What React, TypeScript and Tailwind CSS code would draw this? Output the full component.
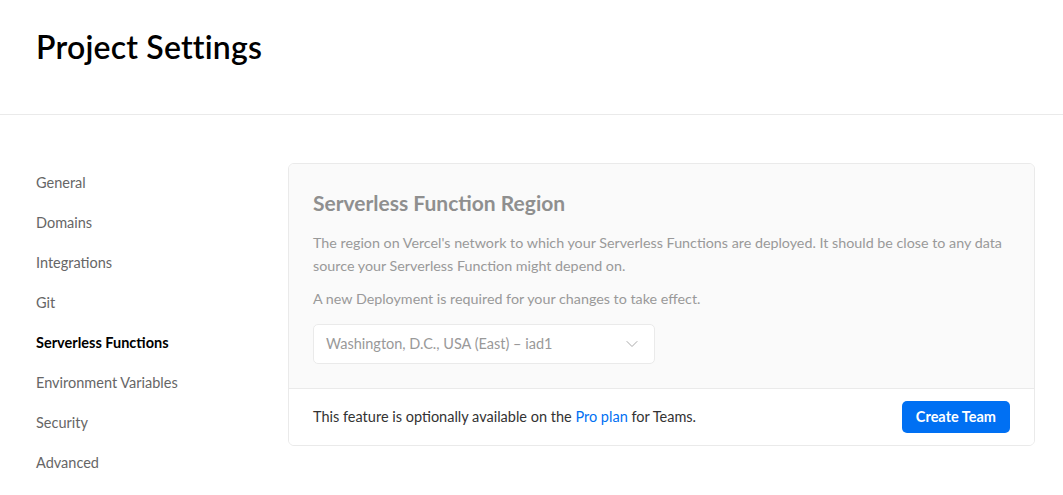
import { ChevronDown } from 'lucide-react'

const NAV = [
  'General',
  'Domains',
  'Integrations',
  'Git',
  'Serverless Functions',
  'Environment Variables',
  'Security',
  'Advanced',
]

export default function App() {
  const active = 'Serverless Functions'

  return (
    <div className="min-h-screen bg-white text-[#111] font-['Lato','Noto_Sans',sans-serif]">
      {/* Header */}
      <header className="h-[115px] border-b border-[#eaeaea] px-[36px] pt-[26px]">
        <h1 className="text-[32px] leading-[42px] font-semibold tracking-[0.2px] text-black">
          Project Settings
        </h1>
      </header>

      <div className="flex items-start pt-[48px] pl-[36px] pr-[28px]">
        {/* Sidebar */}
        <nav className="w-[252px] shrink-0 pt-[10px] flex flex-col">
          {NAV.map(item => (
            <a
              key={item}
              className={
                item === active
                  ? 'h-[40px] text-[14.5px] leading-[20px] font-bold text-black'
                  : 'h-[40px] text-[14.5px] leading-[20px] text-[#666]'
              }
            >
              {item}
            </a>
          ))}
        </nav>

        {/* Card */}
        <section className="flex-1 border border-[#eaeaea] rounded-[6px] overflow-hidden">
          <div className="bg-[#fafafa] px-[24px] pt-[25px] pb-[24px]">
            <h2 className="text-[21px] leading-[28px] font-bold text-[#8f8f8f]">
              Serverless Function Region
            </h2>
            <p className="mt-[14px] text-[14.3px] leading-[23px] text-[#999]">
              The region on Vercel's network to which your Serverless Functions are deployed. It should be close to any data source your Serverless Function might depend on.
            </p>
            <p className="mt-[10px] text-[14.3px] leading-[23px] text-[#999]">
              A new Deployment is required for your changes to take effect.
            </p>
            <div className="mt-[14px] w-[342px] h-[40px] bg-white border border-[#eaeaea] rounded-[5px] flex items-center justify-between pl-[12px] pr-[12px] text-[14.5px] text-[#999]">
              <span>Washington, D.C., USA (East) – iad1</span>
              <ChevronDown size={20} strokeWidth={1.2} className="text-[#aaa]" />
            </div>
          </div>
          <div className="border-t border-[#eaeaea] bg-white h-[57px] px-[24px] flex items-center justify-between">
            <p className="text-[14.5px] text-[#333]">
              This feature is optionally available on the <span className="text-[#0070f3]">Pro plan</span> for Teams.
            </p>
            <button className="h-[32px] px-[14px] rounded-[5px] bg-[#0070f3] text-white text-[14.5px] font-bold">
              Create Team
            </button>
          </div>
        </section>
      </div>
    </div>
  )
}
